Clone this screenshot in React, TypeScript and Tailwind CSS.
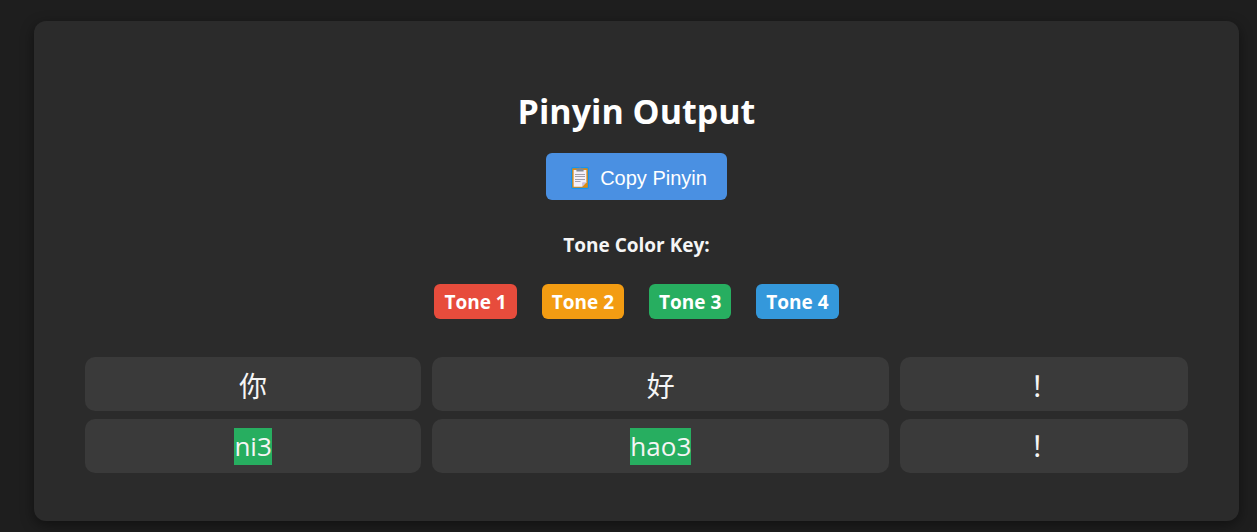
const tones = [
  { label: "Tone 1", color: "bg-[#e74c3c]" },
  { label: "Tone 2", color: "bg-[#f39c12]" },
  { label: "Tone 3", color: "bg-[#27ae60]" },
  { label: "Tone 4", color: "bg-[#3498db]" },
];

const syllables = [
  { hanzi: "你", pinyin: "ni3", style: "bg-[#27ae60] text-[26px]" },
  { hanzi: "好", pinyin: "hao3", style: "bg-[#27ae60] text-[26px]" },
  { hanzi: "！", pinyin: "！", style: "" },
];

function ClipboardIcon() {
  return (
    <svg width="18" height="22" viewBox="0 0 18 22" aria-hidden="true">
      <rect x="0.6" y="0.6" width="16.8" height="20.8" rx="1.2" fill="#dd8a12" stroke="#1195f5" strokeWidth="1.2" />
      <path d="M2.6 3h12.8v12.3l-4.3 4.5H2.6z" fill="#f5f0fa" />
      <path d="M15.4 15.3l-4.3 4.5v-3.5a1 1 0 0 1 1-1z" fill="#cdbfd8" />
      <path d="M5.4 1.4h2.1a1.5 1 0 0 1 3 0h2.1v3.2H5.4z" fill="#858b94" />
      <path d="M4 7.5h10M4 9.5h10M4 12.5h10M4 14.5h5.5" stroke="#a3a1ad" strokeWidth="1" />
    </svg>
  );
}

const cell = "h-[54px] rounded-[10px] bg-[#3a3a3a] p-0 text-center align-middle font-normal";

export default function App() {
  return (
    <div className="min-h-screen bg-[#1e1e1e] pt-[21px] pr-[18px] pb-[11px] pl-[34px] font-['Open_Sans','Noto_Sans_CJK_SC',sans-serif] text-[#f5f5f5]">
      <main className="flex flex-col items-center rounded-xl bg-[#2b2b2b] px-10 pt-[66px] pb-10 shadow-[0_4px_14px_rgba(0,0,0,0.45)]">
        <h1 className="text-[34px] leading-12 font-bold text-white">Pinyin Output</h1>
        <button
          type="button"
          className="mt-[18px] flex h-[47px] items-center gap-[11px] rounded-md bg-[#4a90e2] pt-[2px] pr-5 pl-[25px] font-['Liberation_Sans',sans-serif] text-xl text-white"
        >
          <ClipboardIcon />
          Copy Pinyin
        </button>
        <h2 className="mt-[31px] text-[19px] leading-7 font-bold">Tone Color Key:</h2>
        <ul className="mt-[25px] flex gap-[25px] text-[19px] font-bold text-white">
          {tones.map((tone) => (
            <li key={tone.label} className={`flex h-[35px] items-center rounded-md px-[10px] pt-[2px] ${tone.color}`}>
              {tone.label}
            </li>
          ))}
        </ul>
        <table className="mt-[30px] w-full table-fixed border-separate border-spacing-x-[11px] border-spacing-y-2 text-[28px] leading-9">
          <colgroup>
            <col className="w-[31.1%]" />
            <col className="w-[42.3%]" />
            <col className="w-[26.6%]" />
          </colgroup>
          <tbody>
            <tr>
              {syllables.map((s) => (
                <td key={s.hanzi} className={`${cell} pt-[3px]`}>
                  {s.hanzi}
                </td>
              ))}
            </tr>
            <tr>
              {syllables.map((s) => (
                <td key={s.pinyin} className={cell}>
                  <span className={`inline-block leading-[37px] ${s.style}`}>{s.pinyin}</span>
                </td>
              ))}
            </tr>
          </tbody>
        </table>
      </main>
    </div>
  );
}
